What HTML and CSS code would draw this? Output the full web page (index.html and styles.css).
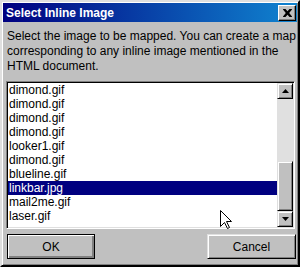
FILE: index.html
```html
<!DOCTYPE html>
<html>
<head>
<meta charset="utf-8">
<link rel="stylesheet" href="styles.css">
</head>
<body>
<div class="dialog">
  <div class="titlebar">
    <span class="title">Select Inline Image</span>
    <div class="close">
      <svg width="9" height="8" viewBox="0 0 9 8"><path d="M0 0h2.5l2 2.3 2-2.3h2.5v0.6l-2.8 3.4 2.8 3.4v0.6h-2.5l-2-2.3-2 2.3h-2.5v-0.6l2.8-3.4-2.8-3.4z" fill="#000"/></svg>
    </div>
  </div>
  <p class="desc">Select the image to be mapped. You can create a map<br>corresponding to any inline image mentioned in the<br>HTML document.</p>
  <div class="listbox">
    <ul class="items">
      <li>dimond.gif</li>
      <li>dimond.gif</li>
      <li>dimond.gif</li>
      <li>dimond.gif</li>
      <li>looker1.gif</li>
      <li>dimond.gif</li>
      <li>blueline.gif</li>
      <li class="sel">linkbar.jpg</li>
      <li>mail2me.gif</li>
      <li>laser.gif</li>
    </ul>
    <div class="scrollbar">
      <div class="sbtn"><svg width="7" height="4" viewBox="0 0 7 4"><path d="M3.5 0L7 4H0z" fill="#000"/></svg></div>
      <div class="track"></div>
      <div class="thumb"></div>
      <div class="sbtn"><svg width="7" height="4" viewBox="0 0 7 4"><path d="M0 0h7L3.5 4z" fill="#000"/></svg></div>
    </div>
  </div>
  <div class="buttons">
    <div class="btn default"><span>OK</span></div>
    <div class="btn cancel"><span>Cancel</span></div>
  </div>
  <svg class="cursor" width="12" height="19" viewBox="0 0 12 19"><path d="M0.5 0.5V16.5L4.5 12.5L7.5 18.5L9.5 17.5L6.5 11.5H11.5Z" fill="#fff" stroke="#000" stroke-width="1" stroke-linejoin="miter"/></svg>
</div>
</body>
</html>
```

FILE: styles.css
```css
html, body {
  margin: 0;
  padding: 0;
  background: #c0c0c0;
}

.dialog {
  position: relative;
  box-sizing: border-box;
  width: 300px;
  height: 267px;
  background: #c0c0c0;
  border: 2px solid;
  border-color: #dfdfdf #000 #000 #dfdfdf;
  box-shadow: inset 1px 1px #fff, inset -1px -1px #808080;
  padding: 1px;
  display: flex;
  flex-direction: column;
  font-family: "Liberation Sans", Arial, sans-serif;
  font-size: 12px;
  color: #000;
}

.titlebar {
  height: 19px;
  background: linear-gradient(90deg, #000080, #1084d0);
  display: flex;
  align-items: center;
  justify-content: space-between;
  padding: 0 1px 0 3px;
}

.title {
  color: #fff;
  font-weight: bold;
  font-size: 12px;
}

.close {
  box-sizing: border-box;
  width: 18px;
  height: 16px;
  background: #c0c0c0;
  border: 1px solid;
  border-color: #fff #000 #000 #fff;
  box-shadow: inset -1px -1px #808080;
  display: flex;
  align-items: center;
  justify-content: center;
}

.desc {
  margin: 7px 0 0 4px;
  line-height: 15px;
}

.listbox {
  box-sizing: border-box;
  height: 148px;
  margin: 7px 2px 0 3px;
  border: 1px solid;
  border-color: #808080 #fff #fff #808080;
  box-shadow: inset 1px 1px #000, inset -1px -1px #dfdfdf;
  padding: 1px;
  display: flex;
  background: #fff;
}

.items {
  list-style: none;
  margin: 0;
  padding: 0;
  flex: 1;
  overflow: hidden;
}

.items li {
  height: 14px;
  line-height: 14px;
  padding-left: 1px;
  white-space: nowrap;
}

.items li.sel {
  background: #000080;
  color: #fff;
}

.scrollbar {
  width: 16px;
  display: flex;
  flex-direction: column;
}

.sbtn, .thumb {
  box-sizing: border-box;
  background: #c0c0c0;
  border: 1px solid;
  border-color: #dfdfdf #000 #000 #dfdfdf;
  box-shadow: inset 1px 1px #fff, inset -1px -1px #808080;
}

.sbtn {
  height: 16px;
  display: flex;
  align-items: center;
  justify-content: center;
}

.track {
  height: 62px;
  background: #e0e0e0;
}

.thumb {
  height: 50px;
}

.buttons {
  display: flex;
  justify-content: space-between;
  margin: 5px 1px 0 4px;
}

.btn {
  box-sizing: border-box;
  height: 25px;
  background: #c0c0c0;
  border: 1px solid;
  border-color: #fff #000 #000 #fff;
  box-shadow: inset -1px -1px #808080;
  display: flex;
  align-items: center;
  justify-content: center;
}

.btn.default {
  width: 88px;
  border-color: #000;
  box-shadow: inset 1px 1px #fff, inset -1px -1px #808080, inset -2px -2px #808080;
}

.btn.cancel {
  width: 89px;
  border-color: #dfdfdf #000 #000 #dfdfdf;
  box-shadow: inset 1px 1px #fff, inset -1px -1px #808080;
}

.cursor {
  position: absolute;
  left: 218px;
  top: 208px;
}
```
